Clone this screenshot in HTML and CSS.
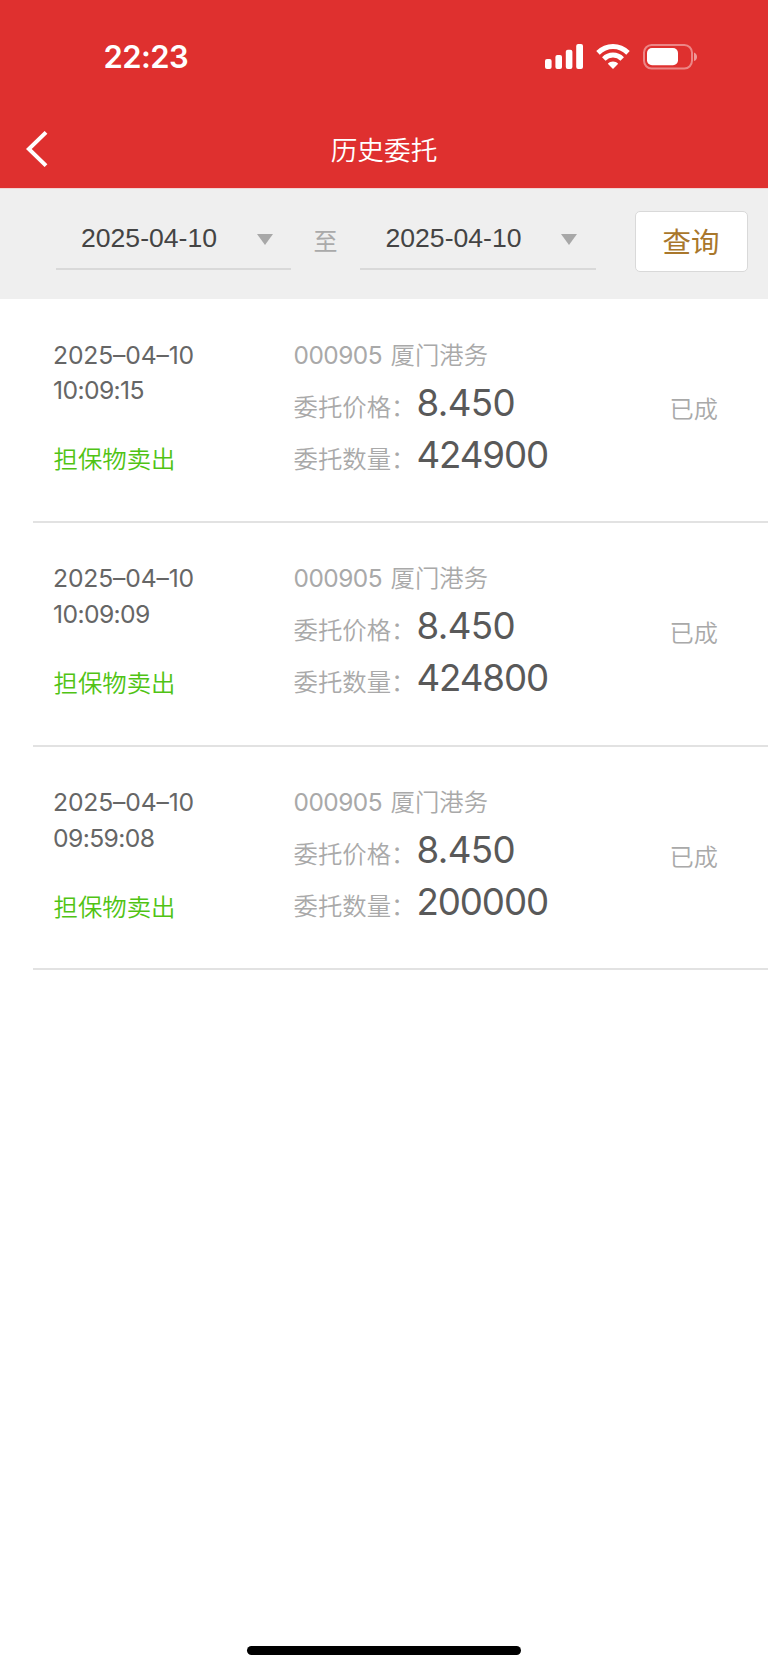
FILE: index.html
```html
<!DOCTYPE html>
<html lang="zh-CN">
<head>
<meta charset="utf-8">
<title>历史委托</title>
<link rel="stylesheet" href="styles.css">
</head>
<body>
<div class="screen">
  <header class="header">
    <div class="status-bar">
      <span class="clock">22:23</span>
      <div class="indicators">
        <svg class="signal" width="39" height="26" viewBox="0 0 39 26" fill="#fff"><rect x="0" y="15" width="6.6" height="10" rx="2"/><rect x="10.4" y="11" width="6.6" height="14" rx="2"/><rect x="20.8" y="5.8" width="6.6" height="19.2" rx="2"/><rect x="31.2" y="0" width="6.8" height="25" rx="2"/></svg>
        <svg class="wifi" width="34" height="26" viewBox="0 0 34 26"><g fill="none" stroke="#fff" stroke-width="5"><path d="M2 8.9C10.6 .5 23.4 .5 32 8.9"/><path d="M7.8 15C13 9.8 21 9.8 26.2 15"/></g><path d="M17 25l-5.2-5.3c2.8-3.1 7.6-3.1 10.4 0z" fill="#fff"/></svg>
        <svg class="battery" width="55" height="26" viewBox="0 0 55 26"><rect x="1" y="1" width="48" height="23.4" rx="7.6" fill="none" stroke="#fff" stroke-opacity=".42" stroke-width="2"/><rect x="4" y="4" width="31" height="17.2" rx="5" fill="#fff"/><path d="M51 8.4c4 1.2 4 7.4 0 8.6z" fill="#fff" fill-opacity=".5"/></svg>
      </div>
    </div>
    <nav class="nav">
      <svg class="back" width="22" height="36" viewBox="0 0 22 36" fill="none" stroke="#fff" stroke-width="4"><path d="M20 1.4L2.8 18 20 34.6"/></svg>
      <h1 class="title">历史委托</h1>
    </nav>
  </header>
  <section class="filter">
    <div class="date"><span>2025-04-10</span><i class="caret"></i></div>
    <span class="to">至</span>
    <div class="date"><span>2025-04-10</span><i class="caret"></i></div>
    <button class="query">查询</button>
  </section>
  <main class="orders">
    <article class="order">
      <div class="when"><p class="day">2025–04–10</p><p class="time">10:09:15</p><p class="side">担保物卖出</p></div>
      <div class="detail"><p class="stock"><span class="code">000905</span>厦门港务</p><p class="field">委托价格：<b>8.450</b></p><p class="field">委托数量：<b class="qty">424900</b></p></div>
      <span class="state">已成</span>
    </article>
    <article class="order">
      <div class="when"><p class="day">2025–04–10</p><p class="time">10:09:09</p><p class="side">担保物卖出</p></div>
      <div class="detail"><p class="stock"><span class="code">000905</span>厦门港务</p><p class="field">委托价格：<b>8.450</b></p><p class="field">委托数量：<b class="qty">424800</b></p></div>
      <span class="state">已成</span>
    </article>
    <article class="order">
      <div class="when"><p class="day">2025–04–10</p><p class="time">09:59:08</p><p class="side">担保物卖出</p></div>
      <div class="detail"><p class="stock"><span class="code">000905</span>厦门港务</p><p class="field">委托价格：<b>8.450</b></p><p class="field">委托数量：<b class="qty">200000</b></p></div>
      <span class="state">已成</span>
    </article>
  </main>
  <div class="home-indicator"></div>
</div>
</body>
</html>
```
FILE: styles.css
```css
* { box-sizing: border-box; }
body { margin: 0; background: #fff; font-family: Inter, "Noto Sans CJK SC", sans-serif; }
p, h1 { margin: 0; }
svg { display: block; flex: none; }

.screen { width: 768px; height: 1669px; display: flex; flex-direction: column; overflow: hidden; }

.header { height: 189px; flex: none; background: #df302f; border-bottom: 1px solid #f2d3d3; }
.status-bar { height: 112px; display: flex; justify-content: space-between; padding: 0 70px 0 103.5px; }
.clock { padding-top: 37px; font-size: 31px; line-height: 40px; font-weight: 600; letter-spacing: -.6px; color: #fff; }
.indicators { display: flex; padding-top: 44px; }
.wifi { margin-left: 12px; }
.battery { margin-left: 13px; }
.nav { height: 76px; display: flex; align-items: center; padding-left: 26px; }
.back { margin-top: -2px; }
.title { flex: 1; margin: -3px 48px 0 0; text-align: center; font-family: "Noto Sans CJK SC", sans-serif; font-size: 26.7px; line-height: 40px; font-weight: 350; color: #fff; }

.filter { height: 110px; flex: none; display: flex; background: #efefef; padding-left: 55.5px; }
.date { width: 235.5px; height: 81px; display: flex; align-items: flex-start; padding: 29px 0 0 25.5px; border-bottom: 2px solid #d9d9d9; font-family: "Liberation Sans", Arial, sans-serif; font-size: 26.6px; line-height: 40px; color: #444; }
.caret { margin: 16px 0 0 39.5px; border: solid transparent; border-width: 11px 8px 0; border-top-color: #a8a8a8; }
.to { width: 69px; text-align: center; padding-top: 31px; font-family: "Noto Sans CJK SC", sans-serif; font-size: 24px; line-height: 40px; color: #aaa; }
.query { width: 113px; height: 61px; margin: 22px 0 0 39px; padding: 0 0 2px; border: 1.5px solid #d9d9d9; border-radius: 5px; background: #fff; font-family: "Noto Sans CJK SC", sans-serif; font-size: 28.5px; line-height: 56px; color: #a9772b; }

.orders { flex: 1; padding-left: 33px; }
.order { height: 223.8px; display: flex; border-bottom: 2px solid #e2e2e2; padding-left: 20px; }
.when { width: 240.5px; padding-top: 38.7px; font-size: 24.7px; line-height: 35.8px; color: #666; font-weight: 400; }
.day { letter-spacing: -.15px; }
.time { letter-spacing: -.6px; }
.side { margin-top: 32.8px; padding-left: .5px; font-size: 24.4px; color: #50c314; font-weight: 350; }
.detail { width: 376px; padding-top: 33.5px; font-size: 24.4px; color: #a9a9a9; font-weight: 350; }
.stock { line-height: 44px; }
.code { margin-right: 8.5px; font-weight: 400; letter-spacing: -.5px; }
.field { height: 52px; line-height: 52px; white-space: nowrap; }
.field b { margin-left: 1px; font-size: 36.7px; font-weight: 400; letter-spacing: -.6px; color: #595959; }
.field .qty { letter-spacing: -1.1px; }
.state { padding-top: 93px; line-height: 36px; font-size: 24.2px; font-weight: 350; color: #a9a9a9; }

.home-indicator { width: 274px; height: 9px; flex: none; margin: 0 auto 14px; border-radius: 5px; background: #000; }
```
